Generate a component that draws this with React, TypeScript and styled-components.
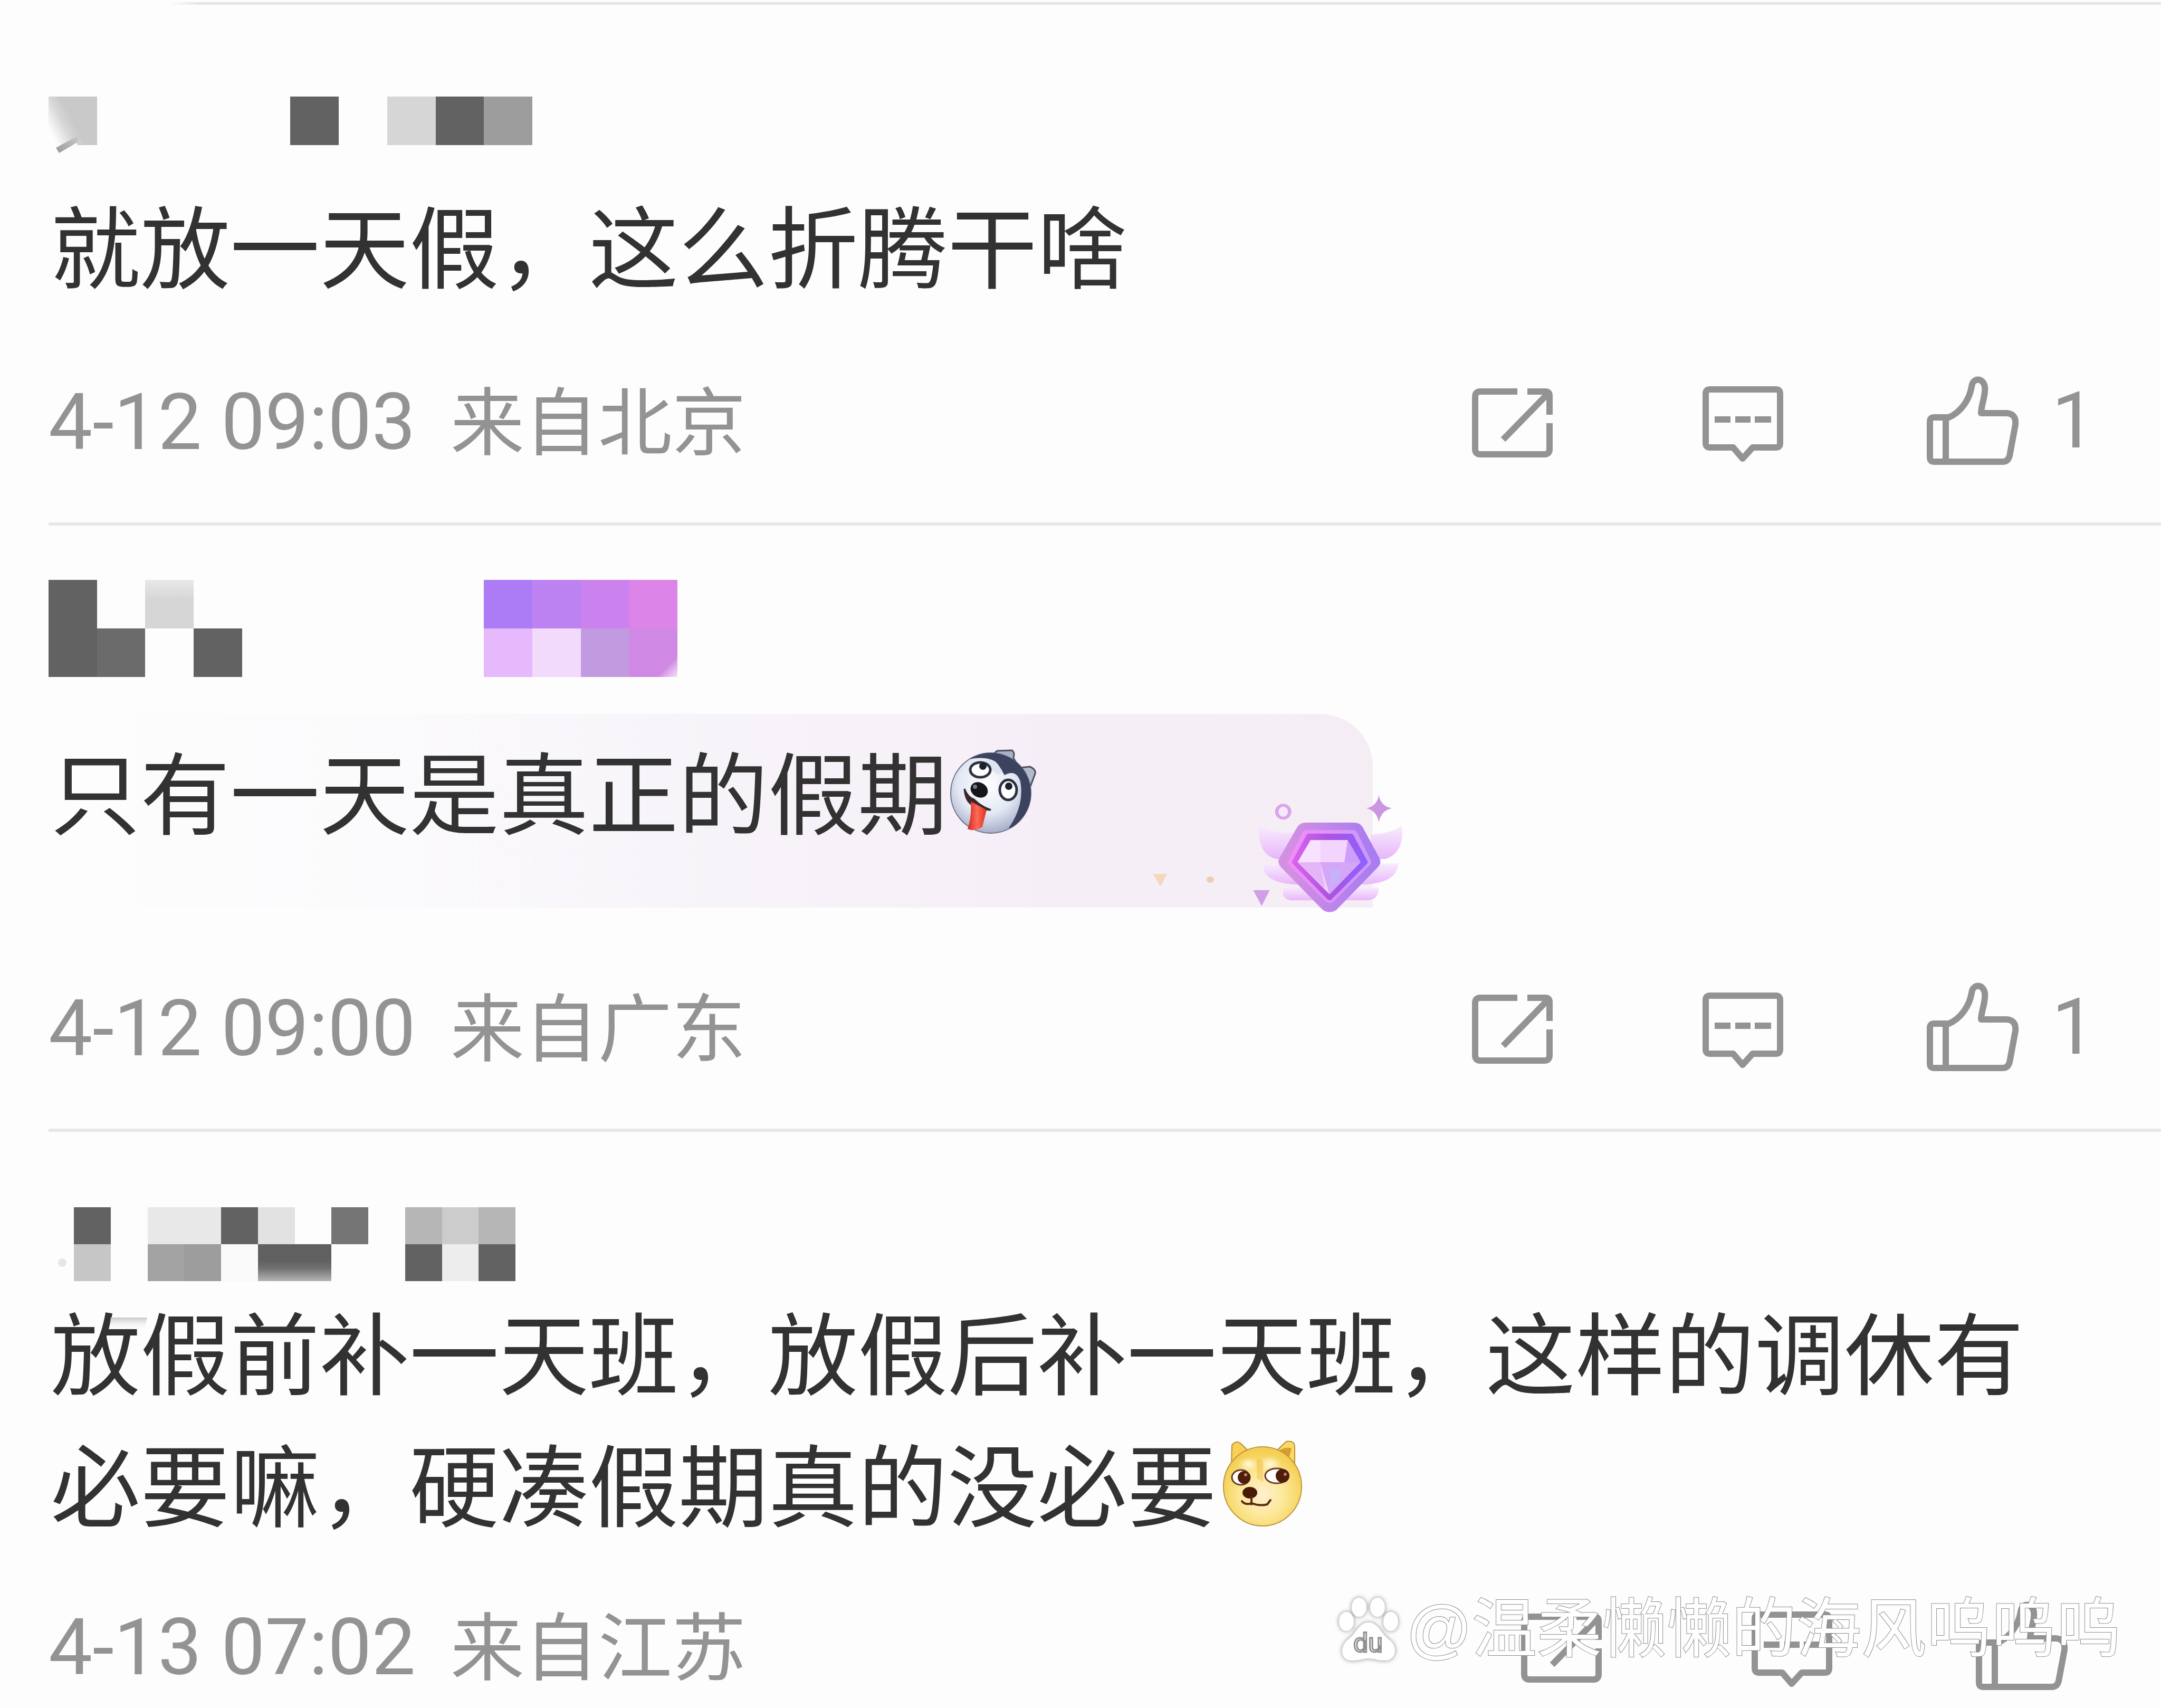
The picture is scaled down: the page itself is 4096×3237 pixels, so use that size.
import React from 'react';
import styled, { createGlobalStyle } from 'styled-components';

const GlobalStyle = createGlobalStyle`
  *, *::before, *::after { box-sizing: border-box; }
  body {
    margin: 0;
    background: #fdfdfd;
    color: #323232;
    font-family: "Noto Sans CJK SC", "Noto Sans", sans-serif;
  }
`;

const Feed = styled.main`
  position: relative;
  padding-top: 4px;
  overflow: hidden;
`;

const TopRule = styled.div`
  height: 5px;
  margin-left: 320px;
  background: linear-gradient(to right, #fdfdfd, #e4e4e4 60px);
`;

const Comment = styled.article<{ $top: number }>`
  margin-left: 92px;
  padding-top: ${(p) => p.$top}px;
  padding-bottom: 107px;
  border-bottom: 6px solid #e7e7e7;

  &:last-of-type {
    padding-bottom: 32px;
    border-bottom: 0;
  }
`;

const MosaicGrid = styled.div<{ $cols: number; $width: number; $row: number; $indent: number }>`
  position: relative;
  display: grid;
  grid-template-columns: repeat(${(p) => p.$cols}, 1fr);
  grid-auto-rows: ${(p) => p.$row}px;
  width: ${(p) => p.$width}px;
  margin-left: ${(p) => p.$indent}px;
`;

const Cell = styled.span<{ $fill: string }>`
  background: ${(p) => p.$fill};
`;

const Smudge = styled.svg`
  position: absolute;
  left: -48px;
  top: 0;
  width: 400px;
  height: 260px;
  overflow: visible;
  pointer-events: none;
  z-index: 1;
`;

const Body = styled.p<{ $top: number; $bottom: number }>`
  margin: 0 196px 0 0;
  padding: ${(p) => p.$top}px 0 ${(p) => p.$bottom}px 4px;
  font-size: 170px;
  line-height: 250px;
`;

const Banner = styled.div`
  position: relative;
  width: 2510px;
  max-width: 100%;
  height: 367px;
  margin: 70px 0 142px;
  border-top-right-radius: 100px;
  background: linear-gradient(to right, #fdfdfd 0%, #fbfafc 25%, #f7f4f9 50%, #f6eef7 75%, #f5edf4 100%);
`;

const BannerArt = styled.svg`
  position: absolute;
  right: -63px;
  bottom: -13px;
  width: 486px;
  height: 230px;
`;

const Emoji = styled.svg`
  width: 170px;
  height: 170px;
  vertical-align: -16px;
`;

const Meta = styled.footer`
  display: flex;
  align-items: center;
  justify-content: space-between;
  height: 170px;
  padding-right: 124px;
  color: #939393;
`;

const Stamp = styled.div`
  display: flex;
  align-items: baseline;
  gap: 66px;
  padding-top: 6px;
`;

const Time = styled.time`
  font-family: Roboto, "Noto Sans", sans-serif;
  font-size: 148px;
  line-height: 170px;
`;

const Place = styled.span`
  font-size: 140px;
  line-height: 140px;
`;

const Actions = styled.div<{ $bare: boolean }>`
  display: flex;
  align-items: center;
  padding-right: ${(p) => (p.$bare ? 52 : 0)}px;
`;

const Action = styled.button`
  display: flex;
  align-items: center;
  gap: 62px;
  margin: 0 0 0 284px;
  padding: 0;
  border: 0;
  background: none;
  color: inherit;
  font-family: Roboto, "Noto Sans", sans-serif;
  font-size: 148px;
  line-height: 170px;
  cursor: pointer;

  &:last-child {
    margin-left: 271px;
  }
`;

const Icon = styled.svg`
  display: block;
  height: 170px;
  fill: none;
  stroke: currentColor;
  stroke-width: 12;
  stroke-linejoin: round;
`;

const Watermark = styled.div`
  position: absolute;
  right: 76px;
  bottom: 85px;
  display: flex;
  align-items: center;
  gap: 8px;
  color: #fff;
  font-size: 123px;
  line-height: 128px;
  white-space: nowrap;
  pointer-events: none;
`;

const WatermarkText = styled.span`
  font-family: "Liberation Sans", "Noto Sans CJK SC", sans-serif;
  -webkit-text-stroke: 2px #8c8c8c;
  paint-order: stroke fill;
`;

const Paw = styled.svg`
  width: 124px;
  height: 126px;
  overflow: visible;
`;

const D = '#626262';
const N = 'transparent';
const fade = 'linear-gradient(#606060 45%, #707070 65%, #b4b4b4)';

type MosaicData = { cols: number; width: number; row: number; indent: number; cells: string[] };

const mosaics: Record<string, MosaicData> = {
  first: {
    cols: 10, width: 917, row: 92, indent: 0,
    cells: ['linear-gradient(62deg, #fdfdfd 12%, #d6d6d6 36%, #c9c9c9 50%)', N, N, N, N, D, N, '#d6d6d6', D, '#9d9d9d'],
  },
  second: {
    cols: 13, width: 1192, row: 92, indent: 0,
    cells: [
      D, N, 'linear-gradient(#e8e8e8, #d6d6d6 40%)', N, N, N, N, N, N, '#ac7cf6', '#bc82f2', '#cc82ee', '#dc84e8',
      D, '#6b6b6b', N, D, N, N, N, N, N, '#e6b8fc', '#f2dafa', '#c29ae0',
      'linear-gradient(315deg, #f6e4fa, #cf88e4 22%)',
    ],
  },
  third: {
    cols: 12, width: 837, row: 70, indent: 48,
    cells: [
      D, N, '#e8e8e8', '#e8e8e8', D, '#e2e2e2', N, '#757575', N, '#b6b6b6', '#cccccc', '#b6b6b6',
      '#c6c6c6', N, '#a3a3a3', '#9d9d9d', '#fafafa', fade, fade, N, N, D, '#ededed', D,
    ],
  },
};

function Mosaic({ data, children }: { data: MosaicData; children?: React.ReactNode }) {
  return (
    <MosaicGrid $cols={data.cols} $width={data.width} $row={data.row} $indent={data.indent} aria-hidden="true">
      {data.cells.map((fill, i) => <Cell key={i} $fill={fill} />)}
      {children}
    </MosaicGrid>
  );
}

function ShareIcon() {
  return (
    <Icon width="153" viewBox="0 0 153 170">
      <path d="M86 29H16Q6 29 6 39V138Q6 148 16 148H137Q147 148 147 138V89M105 29H139Q147 29 147 37V73" />
      <path d="M142 35 59 120" />
    </Icon>
  );
}

function CommentIcon() {
  return (
    <Icon width="153" viewBox="0 0 153 170">
      <path d="M14 25H139Q147 25 147 33V127Q147 135 139 135H95L76 156 58 135H14Q6 135 6 127V33Q6 25 14 25Z" />
      <path d="M23 82H53M62 82H91M99 82H130" />
    </Icon>
  );
}

function LikeIcon() {
  return (
    <Icon width="176" viewBox="0 0 176 170">
      <path d="M7 86Q7 78 15 78H43C66 68 82 44 86 20C88 2 108 2 111 20C113 38 104 54 104 70H152Q171 71 169 92L158 151Q155 162 145 162H15Q7 162 7 154Z" />
      <path d="M37 78V162" />
    </Icon>
  );
}

function MetaRow({ time, place, likes }: { time: string; place: string; likes?: number }) {
  return (
    <Meta>
      <Stamp>
        <Time>{time}</Time>
        <Place>来自{place}</Place>
      </Stamp>
      <Actions $bare={likes === undefined}>
        <Action type="button" aria-label="转发"><ShareIcon /></Action>
        <Action type="button" aria-label="评论"><CommentIcon /></Action>
        <Action type="button" aria-label="赞"><LikeIcon />{likes}</Action>
      </Actions>
    </Meta>
  );
}

function HuskyEmoji() {
  return (
    <Emoji viewBox="0 0 170 170" role="img" aria-label="二哈">
      <defs>
        <radialGradient id="fur" cx=".45" cy=".4" r=".6">
          <stop offset="0" stopColor="#fff" />
          <stop offset=".6" stopColor="#e3e8f4" />
          <stop offset="1" stopColor="#a7b0c8" />
        </radialGradient>
        <linearGradient id="tongue" x1="0" x2="1">
          <stop offset="0" stopColor="#c92a20" />
          <stop offset=".5" stopColor="#ff6a55" />
          <stop offset="1" stopColor="#d8331f" />
        </linearGradient>
        <clipPath id="head"><circle cx="82" cy="88" r="76" /></clipPath>
      </defs>
      <path d="M82 18 94 8 122 7Q128 10 125 22L134 36Z" fill="#aab1c6" stroke="#4a4f63" strokeWidth="3" />
      <path d="M136 40 156 38Q170 44 165 54L156 78Z" fill="#b4bace" stroke="#4a4f63" strokeWidth="3" />
      <circle cx="82" cy="88" r="76" fill="url(#fur)" stroke="#6b728a" strokeWidth="2" />
      <g clipPath="url(#head)">
        <path d="M40 24Q80 16 96 34L108 54Q130 42 138 66Q146 112 116 154L150 152 176 90 150 10 80 0Z" fill="#3b435f" />
        <path d="M60 30Q84 18 94 32L104 46 96 54Q78 36 60 30Z" fill="#dfe4f0" />
      </g>
      <ellipse cx="62" cy="44" rx="19" ry="14" fill="#fff" stroke="#2d3240" strokeWidth="5" />
      <circle cx="67" cy="37" r="7" fill="#1d2030" />
      <ellipse cx="115" cy="82" rx="16" ry="19" fill="#fff" stroke="#2d3240" strokeWidth="5" />
      <circle cx="116" cy="75" r="7" fill="#1d2030" />
      <path d="M32 80Q34 106 50 112 66 120 82 120 64 114 50 100Q38 96 32 80Z" fill="#4a2020" stroke="#33292f" strokeWidth="3" />
      <path d="M44 104Q56 110 74 120L66 152Q52 162 38 156Q46 132 44 104Z" fill="url(#tongue)" />
      <ellipse cx="60" cy="82" rx="17" ry="14" transform="rotate(30 60 82)" fill="#15161c" />
      <circle cx="52" cy="76" r="4" fill="#747985" />
    </Emoji>
  );
}

function DogeEmoji() {
  return (
    <Emoji viewBox="0 0 170 170" role="img" aria-label="doge">
      <defs>
        <radialGradient id="doge" cx=".5" cy=".6" r=".55">
          <stop offset="0" stopColor="#fff0cf" />
          <stop offset=".5" stopColor="#fce89a" />
          <stop offset="1" stopColor="#f4cf52" />
        </radialGradient>
        <radialGradient id="brow">
          <stop offset="0" stopColor="#fffbe6" />
          <stop offset="1" stopColor="#fff3c4" stopOpacity="0" />
        </radialGradient>
      </defs>
      <path d="M28 52 29 12Q37 2 45 8L68 30Z" fill="#f9cf56" stroke="#b98f35" strokeWidth="2" />
      <path d="M112 24 132 5Q148 2 148 16V56Z" fill="#fbd964" stroke="#b98f35" strokeWidth="2" />
      <path d="M118 22Q132 14 142 18L138 34Z" fill="#d79c34" />
      <ellipse cx="87" cy="90" rx="74" ry="75" fill="url(#doge)" stroke="#bf9740" strokeWidth="2" />
      <ellipse cx="60" cy="48" rx="20" ry="14" fill="url(#brow)" />
      <ellipse cx="102" cy="48" rx="22" ry="16" fill="url(#brow)" />
      <path d="M76 40Q82 34 88 44V82L76 74Z" fill="#f2bf4c" opacity=".5" />
      <ellipse cx="46" cy="73" rx="17" ry="14" fill="#fff" stroke="#6b3a20" strokeWidth="3" />
      <circle cx="52" cy="73" r="12" fill="#4f1d0c" />
      <ellipse cx="114" cy="70" rx="22" ry="14" fill="#fff" stroke="#6b3a20" strokeWidth="3" />
      <circle cx="125" cy="70" r="13" fill="#4f1d0c" />
      <circle cx="55" cy="68" r="3" fill="#b98570" />
      <circle cx="130" cy="67" r="3" fill="#b98570" />
      <ellipse cx="63" cy="102" rx="14" ry="11" fill="#4a1a08" />
      <path d="M48 118Q54 126 67 122 82 128 96 124L102 116M66 110V124" fill="none" stroke="#5e2912" strokeWidth="4" strokeLinecap="round" />
    </Emoji>
  );
}

function DiamondArt() {
  return (
    <BannerArt viewBox="200 550 1230 690" preserveAspectRatio="none" aria-hidden="true">
      <defs>
        <linearGradient id="rim" x1="0" x2="1"><stop offset="0" stopColor="#d48fe2" /><stop offset="1" stopColor="#a97cf0" /></linearGradient>
        <linearGradient id="core" x1="0" x2="1"><stop offset="0" stopColor="#d862ea" /><stop offset=".5" stopColor="#a954e2" /><stop offset="1" stopColor="#9060fa" /></linearGradient>
        <linearGradient id="glow" x1="0" x2="1"><stop offset="0" stopColor="#f08cf6" /><stop offset="1" stopColor="#cc98fc" /></linearGradient>
        <linearGradient id="wing" x1="0" y1="0" x2="0" y2="1"><stop offset="0" stopColor="#f8ecfd" /><stop offset="1" stopColor="#e8b6fb" /></linearGradient>
      </defs>
      <path d="M840 1090Q830 1160 890 1160H1240Q1300 1160 1300 1085Z" fill="url(#wing)" />
      <path d="M745 950Q740 1060 900 1070H1230Q1390 1060 1392 950Z" fill="url(#wing)" />
      <path d="M726 735Q790 780 890 775V925H810Q715 900 726 735Z" fill="url(#wing)" />
      <path d="M1410 735Q1360 780 1260 785V925H1330Q1425 890 1410 735Z" fill="url(#wing)" />
      <g strokeLinejoin="round">
        <path d="M950 765H1180L1260 940 1063 1180 865 940Z" fill="url(#rim)" stroke="url(#rim)" strokeWidth="94" />
        <path d="M955 785H1173L1238 943 1063 1150 888 943Z" fill="url(#glow)" stroke="url(#glow)" strokeWidth="50" />
        <path d="M965 795H1165L1232 943 1063 1145 897 943Z" fill="url(#core)" stroke="url(#core)" strokeWidth="28" />
      </g>
      <path d="M972 818H1150L1212 943 1063 1125 910 943Z" fill="#efd0fc" />
      <path d="M972 818H1150L1130 943H910Z" fill="#f8e2ff" />
      <path d="M1018 818H1150L1130 943H1020Z" fill="#f3d4fd" />
      <path d="M1150 818 1212 943H1135Z" fill="#cf9dfa" />
      <path d="M1018 943H1212L1063 1125Z" fill="#d4a6f8" />
      <path d="M910 943H1018L1040 1090Z" fill="#e4b6f8" />
      <path d="M1070 985H1120L1100 1060 1070 1075Z" fill="#c6b2fa" />
      <ellipse cx="841" cy="656" rx="31" ry="37" fill="#f6e8fb" stroke="#d9a4e8" strokeWidth="16" />
      <path d="M1300 562Q1308 625 1362 636 1310 650 1299 716 1290 650 1240 636 1290 625 1300 562Z" fill="#cb96e0" />
      <path d="M697 1102H776L738 1192Z" fill="#cf9fe4" />
      <path d="M216 1010H284L252 1082Z" fill="#f4d8bd" />
      <circle cx="491" cy="1042" r="18" fill="#efccb8" />
    </BannerArt>
  );
}

export default function App() {
  return (
    <>
      <GlobalStyle />
      <Feed>
        <TopRule />
        <Comment $top={174}>
          <Mosaic data={mosaics.first}>
            <Smudge viewBox="-48 0 400 260">
              <defs>
                <linearGradient id="tail" x1="0" y1="1" x2="1" y2="0">
                  <stop offset="0" stopColor="#9a9a9a" />
                  <stop offset="1" stopColor="#c9c9c9" />
                </linearGradient>
              </defs>
              <path d="M14 97 56 74 56 86 20 107Z" fill="url(#tail)" />
              <path d="M24 106 54 87V106Z" fill="#fdfdfd" />
            </Smudge>
          </Mosaic>
          <Body $top={60} $bottom={128}>就放一天假，这么折腾干啥</Body>
          <MetaRow time="4-12 09:03" place="北京" likes={1} />
        </Comment>

        <Comment $top={103}>
          <Mosaic data={mosaics.second} />
          <Banner>
            <DiamondArt />
            <Body $top={17} $bottom={0}>
              只有一天是真正的假期<HuskyEmoji />
            </Body>
          </Banner>
          <MetaRow time="4-12 09:00" place="广东" likes={1} />
        </Comment>

        <Comment $top={143}>
          <Mosaic data={mosaics.third}>
            <Smudge viewBox="-48 0 400 260">
              <defs>
                <linearGradient id="residue" x1="0" y1="0" x2="0" y2="1">
                  <stop offset="0" stopColor="#c8c8c8" />
                  <stop offset="1" stopColor="#fdfdfd" stopOpacity="0" />
                </linearGradient>
              </defs>
              <ellipse cx="-22" cy="105" rx="8" ry="8" fill="#e6e6e6" />
              <path d="M70 209H139L134 232H66Z" fill="url(#residue)" />
            </Smudge>
          </Mosaic>
          <Body $top={4} $bottom={103}>
            放假前补一天班，放假后补一天班，这样的调休有必要嘛，硬凑假期真的没必要<DogeEmoji />
          </Body>
          <MetaRow time="4-13 07:02" place="江苏" />
        </Comment>

        <Watermark>
          <Paw viewBox="0 0 124 126" aria-hidden="true">
            <defs>
              <filter id="halo" x="-20%" y="-20%" width="140%" height="140%">
                <feDropShadow dx="0" dy="0" stdDeviation="4" floodColor="#7a7a7a" floodOpacity=".9" />
              </filter>
            </defs>
            <g fill="#fff" filter="url(#halo)">
              <ellipse cx="43" cy="21" rx="14" ry="18" />
              <ellipse cx="78" cy="21" rx="14" ry="18" />
              <ellipse cx="19" cy="48" rx="14" ry="18" />
              <ellipse cx="103" cy="48" rx="14" ry="18" />
              <path d="M61 50C80 50 84 72 102 84C118 98 112 122 92 122C78 122 72 118 61 118C50 118 44 122 30 122C8 122 6 98 20 84C38 72 42 50 61 50Z" />
            </g>
            <text x="60" y="106" textAnchor="middle" fontFamily="Roboto, sans-serif" fontSize="50" fill="#fff" stroke="#909090" strokeWidth="3">du</text>
          </Paw>
          <WatermarkText>@温柔懒懒的海风呜呜呜</WatermarkText>
        </Watermark>
      </Feed>
    </>
  );
}
